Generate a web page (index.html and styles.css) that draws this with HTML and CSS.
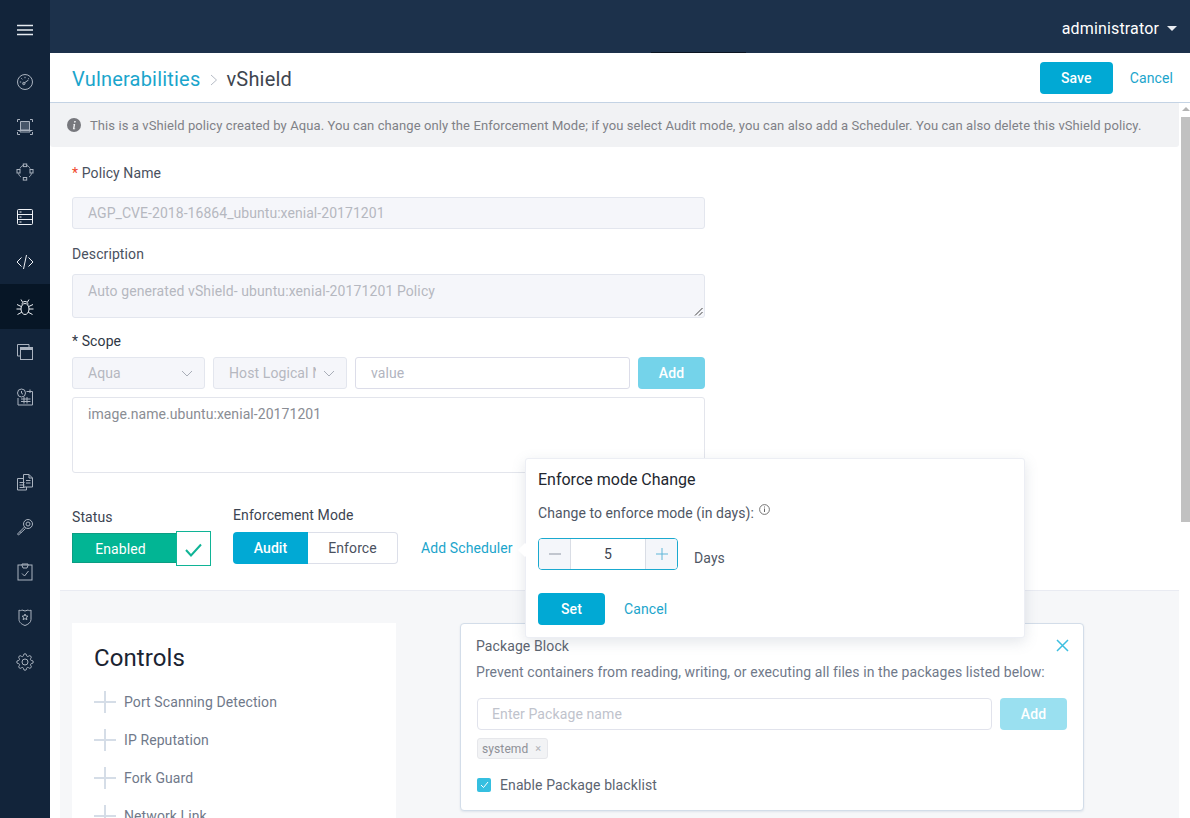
FILE: index.html
```html
<!DOCTYPE html>
<html lang="en">
<head>
<meta charset="utf-8">
<title>vShield</title>
<link rel="stylesheet" href="styles.css">
</head>
<body>
<div class="app">
  <nav class="sidebar">
    <div class="nav-item nav-burger"><svg width="16" height="12" viewBox="0 0 16 12"><path d="M0 1.500h16M0 6h16M0 10.500h16" stroke="#e6ebf1" stroke-width="1.500"/></svg></div>
    <div class="nav-item"><svg viewBox="0 0 18 18"><circle cx="9" cy="9" r="7.500"/><path d="M7.500 10.500l5-3.500M3.800 9h1.400M9 3.800v1.400M5.300 5.300l1 1M12.700 5.300l-.8.8"/><circle cx="7.800" cy="10.500" r="1.200"/></svg></div>
    <div class="nav-item"><svg viewBox="0 0 18 18"><path d="M1.500 4V1.500H4M14 1.500h2.500V4M16.500 14v2.500H14M4 16.500H1.500V14M4.500 3.500h9v8.500h-9z"/><path class="nav-fill" d="M5 4h8v8H5z"/><path d="M1.500 12.500h15M4 12.500v1.500h10v-1.500"/></svg></div>
    <div class="nav-item"><svg viewBox="0 0 18 18"><path d="M4 5.500C5 3.500 6 2.800 7.500 2.300M10.500 2.300C12 2.800 13.500 4 14 5.500M15.500 10.500c-.3 1.500-1.500 3-2.500 3.500M5 14c-1-.5-2.200-2-2.500-3.500"/><rect x="7.300" y="1" width="3.400" height="2.600"/><rect x="1" y="6.500" width="3" height="3.500"/><rect x="14" y="6.500" width="3" height="3.500"/><rect x="7.300" y="14.500" width="3.400" height="2.600"/></svg></div>
    <div class="nav-item nav-bright"><svg viewBox="0 0 18 18"><rect x="1.500" y="1.500" width="15" height="15" rx="1"/><path d="M1.500 6.500h15M1.500 11.500h15M3.500 4h2M3.500 9h2M3.500 14h2"/></svg></div>
    <div class="nav-item nav-bright"><svg viewBox="0 0 18 18"><path d="M5.500 4.500L1 9l4.500 4.500M12.500 4.500L17 9l-4.500 4.500M10.500 2l-3 14"/></svg></div>
    <div class="nav-item nav-active nav-bright"><svg viewBox="0 0 18 18"><ellipse cx="9" cy="11" rx="4" ry="5.500"/><path d="M6 6.500C6 4.500 7.300 3.500 9 3.500s3 1 3 3M6.500 4L5 1.500M11.500 4L13 1.500M5.200 8.500L1 6.500M12.800 8.500l4.200-2M5 11H.5M13 11h4.500M5.800 14.200L1.500 16.500M12.200 14.200l4.300 2.300"/></svg></div>
    <div class="nav-item"><svg viewBox="0 0 18 18"><path d="M13 4V1.500H1.500V13H4"/><rect x="4.500" y="4.500" width="12" height="12"/><path d="M4.500 6h12" stroke-width="2"/></svg></div>
    <div class="nav-item"><svg viewBox="0 0 18 18"><path d="M10.500 3.500h6v13.500H2V10"/><circle cx="5.500" cy="5" r="4"/><path d="M5.500 3v2.200l1.500 1M5 11h9.500M5 13.500h9.500M8 9v6.500M11 9v6.500M14 1.500v3.500"/></svg></div>
    <div class="nav-spacer"></div>
    <div class="nav-item"><svg viewBox="0 0 18 18"><path d="M7 5.500H1.500V17h9v-3M7.500 14V1.500H13l3.500 3.500v9zM13 1.500V5h3.500M3.500 9.500h5M3.500 12h5M3.500 14.500h5M10 7.500h4.500M10 10h4.500"/></svg></div>
    <div class="nav-item"><svg viewBox="0 0 18 18"><circle cx="12" cy="6" r="4.500"/><circle cx="12" cy="6" r="2"/><path d="M8.500 9L1.500 16l1 1 7-6.500M4 13.500l1.500 1.500"/></svg></div>
    <div class="nav-item"><svg viewBox="0 0 18 18"><rect x="2" y="2" width="14" height="15"/><path d="M6 2V1h6v1.500L11 5H7L6 2.500zM6 10.500l2.500 2.500 4-5"/></svg></div>
    <div class="nav-item"><svg viewBox="0 0 18 18"><path d="M3 2c1 .8 2 .8 3 0l3 1 3-1c1 .8 2 .8 3 0v9.500c0 3-3 5-6 6-3-1-6-3-6-6z"/><path d="M9 6l.9 2 2.100.2-1.600 1.400.5 2.100L9 10.600l-1.900 1.100.5-2.100L6 8.200 8.100 8z"/></svg></div>
    <div class="nav-item nav-gear"><svg viewBox="0 0 24 24"><circle cx="12" cy="12" r="4"/><path d="M19.400 15a1.650 1.650 0 0 0 .33 1.820l.06.06a2 2 0 0 1 0 2.830 2 2 0 0 1-2.830 0l-.06-.06a1.650 1.650 0 0 0-1.820-.33 1.650 1.650 0 0 0-1 1.510V21a2 2 0 0 1-2 2 2 2 0 0 1-2-2v-.09A1.650 1.650 0 0 0 9 19.400a1.650 1.650 0 0 0-1.820.33l-.06.06a2 2 0 0 1-2.830 0 2 2 0 0 1 0-2.830l.06-.06a1.650 1.650 0 0 0 .33-1.820 1.650 1.650 0 0 0-1.510-1H3a2 2 0 0 1-2-2 2 2 0 0 1 2-2h.09A1.650 1.650 0 0 0 4.600 9a1.650 1.650 0 0 0-.33-1.820l-.06-.06a2 2 0 0 1 0-2.830 2 2 0 0 1 2.830 0l.06.06a1.650 1.650 0 0 0 1.820.33H9a1.650 1.650 0 0 0 1-1.510V3a2 2 0 0 1 2-2 2 2 0 0 1 2 2v.09a1.650 1.650 0 0 0 1 1.510 1.650 1.650 0 0 0 1.820-.33l.06-.06a2 2 0 0 1 2.830 0 2 2 0 0 1 0 2.830l-.06.06a1.650 1.650 0 0 0-.33 1.820V9a1.650 1.650 0 0 0 1.510 1H21a2 2 0 0 1 2 2 2 2 0 0 1-2 2h-.09a1.650 1.650 0 0 0-1.510 1z"/></svg></div>
  </nav>
  <div class="workspace">
    <header class="topbar">
      <span class="user">administrator</span><span class="caret"></span>
      <span class="topbar-tab"></span>
    </header>
    <div class="titlebar">
      <div class="crumbs">
        <a class="crumb-link">Vulnerabilities</a>
        <svg class="crumb-sep" width="8" height="12" viewBox="0 0 8 12"><path d="M1 1l5.500 5L1 11" fill="none" stroke="#b6bcc6" stroke-width="1"/></svg>
        <span class="crumb-current">vShield</span>
      </div>
      <div class="title-actions">
        <button class="btn btn-primary btn-save">Save</button>
        <a class="link-cancel">Cancel</a>
      </div>
    </div>
    <div class="body-row">
      <main class="content">
        <div class="notice">
          <svg width="14" height="14" viewBox="0 0 14 14"><circle cx="7" cy="7" r="7" fill="#77787d"/><path d="M7.300 3h1.500l-.3 1.500H7zM6.700 6h1.500L7.400 10.500H8.300L8 11.300H5.900L6.700 6.800H6z" fill="#f1f2f4"/></svg>
          <span>This is a vShield policy created by Aqua. You can change only the Enforcement Mode; if you select Audit mode, you can also add a Scheduler. You can also delete this vShield policy.</span>
        </div>
        <form class="form">
          <div class="label label-name"><span class="req">*</span> Policy Name</div>
          <div class="field field-disabled field-name">AGP_CVE-2018-16864_ubuntu:xenial-20171201</div>
          <div class="label label-desc">Description</div>
          <div class="field field-disabled field-desc">Auto generated vShield- ubuntu:xenial-20171201 Policy
            <svg class="grip" width="9" height="9" viewBox="0 0 9 9"><path d="M8.500 1L1 8.500M8.500 5L5 8.500" stroke="#444" stroke-width="1" fill="none"/></svg>
          </div>
          <div class="label label-scope">* Scope</div>
          <div class="scope-row">
            <div class="field field-disabled select select-a">Aqua<svg width="12" height="7" viewBox="0 0 12 7"><path d="M1 1l5 5 5-5" fill="none" stroke="#a9aeb8"/></svg></div>
            <div class="field field-disabled select select-b"><span class="select-clip">Host Logical Name</span><svg width="12" height="7" viewBox="0 0 12 7"><path d="M1 1l5 5 5-5" fill="none" stroke="#a9aeb8"/></svg></div>
            <div class="field field-value">value</div>
            <button class="btn btn-add" type="button">Add</button>
          </div>
          <div class="scope-values">image.name.ubuntu:xenial-20171201</div>
          <div class="mode-row">
            <div class="mode-col">
              <div class="label label-status">Status</div>
              <div class="toggle"><span class="toggle-on">Enabled</span><span class="toggle-box"><svg width="17" height="14" viewBox="0 0 17 14"><path d="M1 7l5 5.500L16 1.500" fill="none" stroke="#10b496" stroke-width="2"/></svg></span></div>
            </div>
            <div class="mode-col mode-enf">
              <div class="label label-enf">Enforcement Mode</div>
              <div class="segment"><span class="seg seg-on">Audit</span><span class="seg seg-off">Enforce</span></div>
            </div>
            <a class="add-sched">Add Scheduler</a>
          </div>
        </form>
        <section class="lower">
          <div class="controls">
            <h2>Controls</h2>
            <div class="control"><span class="plus"></span>Port Scanning Detection</div>
            <div class="control"><span class="plus"></span>IP Reputation</div>
            <div class="control"><span class="plus"></span>Fork Guard</div>
            <div class="control"><span class="plus"></span>Network Link</div>
          </div>
          <div class="pkg">
            <div class="pkg-head"><span>Package Block</span><svg width="13" height="13" viewBox="0 0 13 13"><path d="M1 1l11 11M12 1L1 12" stroke="#3dbfe0" stroke-width="1.500" fill="none"/></svg></div>
            <p class="pkg-desc">Prevent containers from reading, writing, or executing all files in the packages listed below:</p>
            <div class="pkg-row"><div class="pkg-input">Enter Package name</div><button class="btn btn-add-light" type="button">Add</button></div>
            <span class="tag">systemd <i>×</i></span>
            <div class="check-row"><span class="check"><svg width="9" height="8" viewBox="0 0 9 8"><path d="M1 4l2.500 2.500L8 1" fill="none" stroke="#fff" stroke-width="1"/></svg></span>Enable Package blacklist</div>
          </div>
        </section>
      </main>
      <div class="scrollbar"><span class="sb-up"></span><span class="sb-thumb"></span></div>
    </div>
  </div>
  <div class="popover">
    <span class="pop-arrow"></span>
    <div class="pop-title">Enforce mode Change</div>
    <div class="pop-label">Change to enforce mode (in days): <svg width="11" height="11" viewBox="0 0 11 11"><circle cx="5.500" cy="5.500" r="4.900" fill="none" stroke="#666" stroke-width=".9"/><path d="M5.500 4.500v3.500M5.500 2.500v1" stroke="#666" stroke-width="1"/></svg></div>
    <div class="pop-row">
      <div class="stepper">
        <span class="step"><svg width="12" height="2" viewBox="0 0 12 2"><path d="M0 1h12" stroke="#8e96a3"/></svg></span>
        <span class="step-val">5</span>
        <span class="step step-r"><svg width="12" height="12" viewBox="0 0 12 12"><path d="M0 6h12M6 0v12" stroke="#5fb6d8"/></svg></span>
      </div>
      <span class="days">Days</span>
    </div>
    <div class="pop-actions"><button class="btn btn-primary btn-set" type="button">Set</button><a class="link-cancel">Cancel</a></div>
  </div>
</div>
</body>
</html>
```
FILE: styles.css
```css
* { box-sizing: border-box; }
html, body { margin: 0; height: 100%; overflow: hidden; }
body { font-family: Roboto, "Liberation Sans", sans-serif; font-size: 14px; letter-spacing: .1px; color: #4a5363; background: #fff; }
.app { position: relative; display: flex; width: 1190px; height: 818px; overflow: hidden; }

.sidebar { width: 50px; flex: none; background: #12243a; display: flex; flex-direction: column; align-items: stretch; }
.nav-item { height: 45px; display: flex; align-items: center; justify-content: center; }
.nav-item svg { width: 18px; height: 18px; fill: none; stroke: #aab3bf; stroke-width: 1; }
.nav-item .nav-fill { fill: #aab3bf; fill-opacity: .35; stroke: none; }
.nav-item.nav-gear svg { stroke-width: 1.330; }
.nav-burger { height: 59px; }
.nav-burger svg { stroke: none; width: 16px; height: 12px; margin-top: 1px; }
.nav-bright svg { stroke: #eef1f5; }
.nav-active { background: #071626; }
.nav-spacer { height: 40px; }

.workspace { flex: 1; min-width: 0; display: flex; flex-direction: column; }
.topbar { position: relative; height: 53px; flex: none; background: #1c314b; display: flex; align-items: center; justify-content: flex-end; padding: 0 13px 0 0; color: #fff; font-size: 16px; }
.user { margin: 4px 8px 0 0; letter-spacing: .15px; }
.caret { width: 0; height: 0; border-left: 5px solid transparent; border-right: 5px solid transparent; border-top: 5px solid #e8ecf1; margin-top: 3px; }
.topbar-tab { position: absolute; left: 601px; bottom: 0; width: 95px; height: 1px; background: #0b1522; }

.titlebar { height: 50px; flex: none; display: flex; align-items: center; justify-content: space-between; padding: 0 17px 0 22px; border-bottom: 1px solid #c4d3e4; }
.crumbs { display: flex; align-items: center; font-size: 20px; letter-spacing: .2px; margin-top: 2px; }
.crumb-link { color: #1ba5cc; }
.crumb-sep { margin: 2px 8px 0 10px; }
.crumb-current { color: #3f4650; }
.title-actions { display: flex; align-items: center; gap: 17px; margin-top: 1px; }
.btn { border: 0; border-radius: 4px; font: 500 14px Roboto, "Liberation Sans", sans-serif; letter-spacing: .1px; color: #fff; display: flex; align-items: center; justify-content: center; padding: 0; }
.btn-primary { background: #01a9d4; }
.btn-save { width: 73px; height: 32px; }
.link-cancel { color: #1ba5cc; font-size: 14px; }

.body-row { flex: 1; min-height: 0; display: flex; }
.content { flex: 1; min-width: 0; overflow: hidden; }
.notice { height: 44px; background: #f1f2f4; display: flex; align-items: center; gap: 9px; padding: 0 0 0 17px; color: #7f8187; font-size: 13px; letter-spacing: .09px; border-radius: 0 0 3px 3px; white-space: nowrap; }
.notice svg { flex: none; margin-top: -1px; }

.form { padding: 0 0 0 22px; height: 443px; }
.label { color: #4a5160; font-size: 14px; line-height: 16px; }
.req { color: #f0472c; }
.label-name { padding-top: 18px; height: 50px; }
.field { border: 1px solid #dfe2ec; border-radius: 3px; display: flex; align-items: center; font-size: 14px; background: #fff; }
.field-disabled { background: #f5f6fa; color: #b5b8c0; border-color: #e3e6ee; }
.field-name { width: 633px; height: 32px; padding-left: 15px; letter-spacing: .05px; }
.label-desc { padding-top: 17px; height: 45px; }
.field-desc { position: relative; width: 633px; height: 44px; padding: 8px 15px 0; align-items: flex-start; }
.grip { position: absolute; right: 1px; bottom: 1px; }
.label-scope { padding-top: 15px; height: 39px; color: #2f3745; }
.scope-row { display: flex; gap: 8px; height: 32px; width: 633px; }
.select { height: 32px; padding: 0 11px 0 15px; justify-content: space-between; }
.select-a { width: 133px; }
.select-b { width: 134px; padding-right: 11px; }
.select-clip { width: 87px; overflow: hidden; white-space: nowrap; }
.field-value { width: 275px; height: 32px; padding-left: 15px; color: #b2b5bf; border-color: #dcdde9; }
.btn-add { width: 67px; height: 32px; background: #74d3ea; }
.scope-values { width: 633px; height: 76px; margin-top: 8px; border: 1px solid #e3e5ec; border-radius: 3px; padding: 8px 15px; color: #8a8d94; font-size: 14px; line-height: 16px; letter-spacing: .07px; }
.mode-row { display: flex; margin-top: 33px; height: 60px; position: relative; }
.mode-col { display: flex; flex-direction: column; }
.label-status { height: 25px; padding-top: 3px; color: #3c4452; }
.toggle { display: flex; width: 139px; height: 35px; }
.toggle-on { width: 105px; height: 30px; margin-top: 2px; padding: 1px 8px 0 0; background: #02b594; border: 1px solid #0b9d82; color: #fff; display: flex; align-items: center; justify-content: center; font-size: 14px; }
.toggle-box { width: 35px; height: 35px; margin-left: -1px; border: 1px solid #10b496; background: #fff; display: flex; align-items: center; justify-content: center; padding-top: 2px; }
.mode-enf { margin-left: 22px; }
.label-enf { height: 26px; padding-top: 1px; color: #3c4452; }
.segment { display: flex; width: 165px; height: 32px; }
.seg { display: flex; align-items: center; justify-content: center; font-size: 14px; }
.seg-on { width: 75px; background: #01a9d4; color: #fff; font-weight: 500; border-radius: 4px 0 0 4px; }
.seg-off { width: 90px; border: 1px solid #dcdfe9; border-left: 0; border-radius: 0 4px 4px 0; color: #4a5160; }
.add-sched { color: #1ba5cc; font-size: 14px; margin: 34px 0 0 23px; line-height: 16px; }

.lower { background: #f6f7f9; margin-left: 10px; height: 228px; border-top: 1px solid #e9ebf2; padding: 32px 0 0 12px; display: flex; align-items: flex-start; }
.controls { width: 324px; height: 195px; background: #fff; padding: 20px 0 0 22px; flex: none; overflow: hidden; }
.controls h2 { margin: 0 0 10px; font: 400 24px/30px Roboto, "Liberation Sans", sans-serif; color: #1b2432; }
.control { display: flex; align-items: center; height: 38px; color: #70798a; font-size: 14px; margin-left: 0; }
.plus { position: relative; width: 22px; height: 22px; margin-right: 8px; flex: none; background: linear-gradient(#d5dde7,#d5dde7) center/22px 2px no-repeat, linear-gradient(#d5dde7,#d5dde7) center/2px 22px no-repeat; }
.pkg { width: 624px; height: 188px; margin-left: 64px; background: #fff; border: 1px solid #d3dde9; border-radius: 4px; padding: 14px 16px 0; box-shadow: 0 1px 2px rgba(160,175,195,.25); flex: none; }
.pkg-head { display: flex; justify-content: space-between; align-items: center; margin: 0 -2px 0 -1px; height: 16px; color: #5c6470; font-size: 14px; }
.pkg-head svg { margin-top: -2px; }
.pkg-desc { margin: 10px 0 0 -1px; color: #70798a; font-size: 14px; line-height: 16px; letter-spacing: .08px; white-space: nowrap; }
.pkg-row { display: flex; gap: 8px; margin-top: 18px; height: 32px; width: 590px; }
.pkg-input { width: 515px; height: 32px; border: 1px solid #e1e3ec; border-radius: 4px; display: flex; align-items: center; padding-left: 14px; color: #c0c3cc; }
.btn-add-light { width: 67px; height: 32px; background: #9ae0f0; }
.tag { display: inline-flex; align-items: center; gap: 4px; height: 21px; margin-top: 8px; padding: 0 6px 0 4px; background: #f2f3f5; border: 1px solid #e6e7eb; border-radius: 3px; color: #8e9097; font-size: 12px; }
.tag i { font-style: normal; color: #b0b2b8; font-size: 11px; margin-left: 3px; }
.check-row { display: flex; align-items: center; gap: 9px; margin-top: 18px; color: #5c6470; font-size: 14px; }
.check { width: 14px; height: 14px; background: #35bfe0; border-radius: 2px; display: flex; align-items: center; justify-content: center; }

.scrollbar { width: 11px; flex: none; display: flex; flex-direction: column; background: #fff; padding: 4px 0 0 2px; }
.sb-up { width: 0; height: 0; margin: 0 auto 6px; border-left: 4px solid transparent; border-right: 4px solid transparent; border-bottom: 4px solid #b4b4b4; }
.sb-thumb { width: 9px; height: 405px; background: #c1c1c1; }

.popover { position: absolute; left: 525px; top: 458px; width: 500px; height: 180px; background: #fff; border: 1px solid #eceef4; border-radius: 3px; box-shadow: 0 4px 14px rgba(100,115,140,.18); padding: 12px 12px 0; z-index: 5; }
.pop-arrow { position: absolute; left: -6px; top: 86px; width: 10px; height: 10px; background: #fff; transform: rotate(45deg); }
.pop-title { font-size: 16px; line-height: 18px; color: #23272f; letter-spacing: 0; }
.pop-label { margin-top: 15px; font-size: 14px; line-height: 16px; letter-spacing: .07px; color: #4f5765; position: relative; }
.pop-label svg { vertical-align: 3px; margin-left: 1px; }
.pop-row { display: flex; align-items: flex-start; margin-top: 17px; }
.stepper { display: flex; width: 140px; height: 32px; border: 1px solid #1aa9cf; border-radius: 4px; overflow: hidden; }
.step { width: 32px; flex: none; background: #f4f6fa; border-right: 1px solid #d9dde5; display: flex; align-items: center; justify-content: center; }
.step-r { border-right: 0; border-left: 1px solid #d9dde5; }
.step-val { flex: 1; text-align: center; line-height: 30px; color: #3c4350; }
.days { margin: 12px 0 0 16px; line-height: 16px; color: #4f5765; }
.pop-actions { display: flex; align-items: center; gap: 19px; margin-top: 23px; }
.btn-set { width: 67px; height: 32px; }
```
